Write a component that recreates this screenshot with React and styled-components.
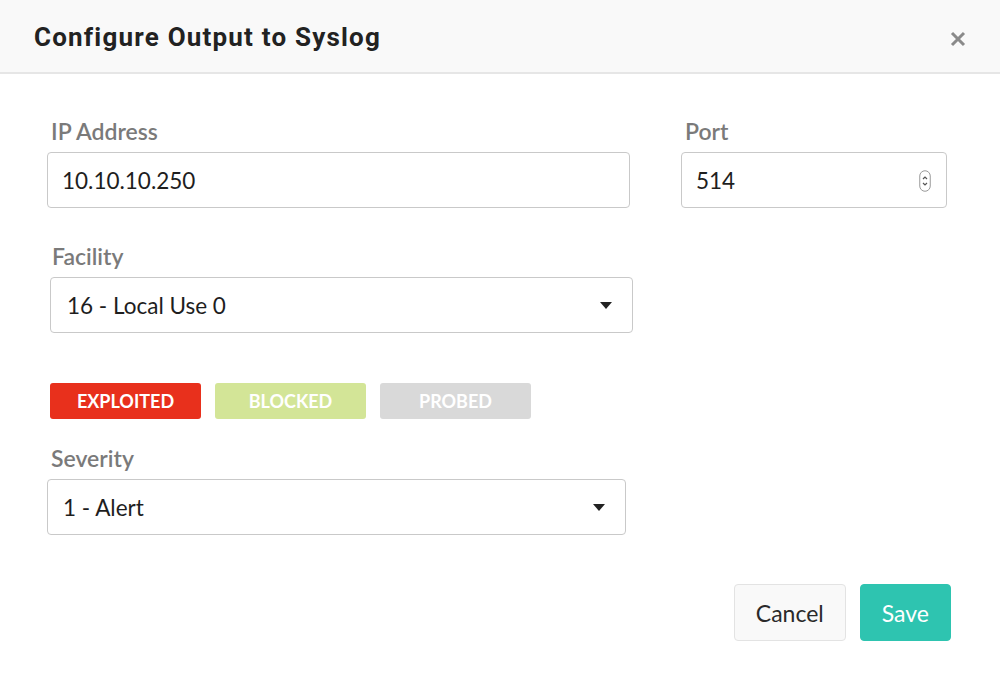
import React from "react";
import styled, { createGlobalStyle } from "styled-components";

const GlobalStyle = createGlobalStyle`
  html, body {
    margin: 0;
    padding: 0;
    background: #ffffff;
  }
  body {
    font-family: Lato, "Noto Sans", sans-serif;
  }
  * {
    box-sizing: border-box;
  }
`;

export default function App() {
  return (
    <>
      <GlobalStyle />
      <Modal>
        <Header>
          <Title>Configure Output to Syslog</Title>
          <CloseButton aria-label="close">
            <svg width="16" height="16" viewBox="0 0 16 16">
              <path
                d="M2 2 L14 14 M14 2 L2 14"
                stroke="#8a8a8a"
                strokeWidth="3"
                strokeLinecap="butt"
              />
            </svg>
          </CloseButton>
        </Header>

        <Body>
          <Row>
            <Field $width={583}>
              <Label>IP Address</Label>
              <Input>10.10.10.250</Input>
            </Field>
            <Field $width={266}>
              <Label>Port</Label>
              <Input>
                514
                <Spinner>
                  <svg width="12" height="22" viewBox="0 0 12 22">
                    <rect
                      x="0.75"
                      y="0.75"
                      width="10.5"
                      height="20.5"
                      rx="5.25"
                      fill="none"
                      stroke="#9a9a9a"
                      strokeWidth="1"
                    />
                    <path
                      d="M4 9 L6 7 L8 9 M4 13 L6 15 L8 13"
                      fill="none"
                      stroke="#555"
                      strokeWidth="1.2"
                    />
                  </svg>
                </Spinner>
              </Input>
            </Field>
          </Row>

          <Field $width={583} $shift={3} $top={35}>
            <Label $shift={-2}>Facility</Label>
            <Select>
              16 - Local Use 0
              <Caret />
            </Select>
          </Field>

          <Badges>
            <Badge $bg="#e8301c">EXPLOITED</Badge>
            <Badge $bg="#d3e597">BLOCKED</Badge>
            <Badge $bg="#d9d9d9">PROBED</Badge>
          </Badges>

          <Field $width={579} $top={26}>
            <Label>Severity</Label>
            <Select $pad={15}>
              1 - Alert
              <Caret />
            </Select>
          </Field>

          <Footer>
            <Button>Cancel</Button>
            <Button $primary>Save</Button>
          </Footer>
        </Body>
      </Modal>
    </>
  );
}

const Modal = styled.div`
  width: 1000px;
  height: 674px;
  background: #ffffff;
  display: flex;
  flex-direction: column;
`;

const Header = styled.div`
  height: 74px;
  background: #f9f9f9;
  border-bottom: 2px solid #e6e6e6;
  display: flex;
  align-items: center;
  justify-content: space-between;
  padding: 0 34px 0 34px;
`;

const Title = styled.h1`
  margin: 2px 0 0 0;
  font-family: Roboto, "Liberation Sans", sans-serif;
  font-weight: 700;
  font-size: 26px;
  color: #222222;
  letter-spacing: 1.2px;
`;

const CloseButton = styled.button`
  border: none;
  background: none;
  padding: 0;
  margin-top: 6px;
  display: flex;
  cursor: pointer;
`;

const Body = styled.div`
  display: flex;
  flex-direction: column;
  padding: 44px 53px 0 47px;
`;

const Row = styled.div`
  display: flex;
  justify-content: space-between;
`;

const Field = styled.div`
  width: ${(p) => p.$width}px;
  margin-left: ${(p) => p.$shift || 0}px;
  margin-top: ${(p) => p.$top || 0}px;
  display: flex;
  flex-direction: column;
`;

const Label = styled.label`
  font-size: 23px;
  line-height: 28px;
  color: #7a7a7a;
  margin: -1px 0 7px ${(p) => 4 + (p.$shift || 0)}px;
  font-weight: 600;
`;

const Input = styled.div`
  height: 56px;
  border: 1px solid #c9c9c9;
  border-radius: 4px;
  display: flex;
  align-items: center;
  justify-content: space-between;
  padding: 0 13px 0 14px;
  font-size: 22.5px;
  color: #1e1e1e;
`;

const Spinner = styled.span`
  display: flex;
  margin-right: 2px;
  margin-top: 2px;
`;

const Select = styled(Input)`
  padding: 0 20px 0 ${(p) => p.$pad || 16}px;
`;

const Caret = styled.span`
  width: 0;
  height: 0;
  border-left: 6px solid transparent;
  border-right: 6px solid transparent;
  border-top: 7px solid #222;
`;

const Badges = styled.div`
  display: flex;
  gap: 14px;
  margin: 50px 0 0 3px;
`;

const Badge = styled.div`
  width: 151px;
  height: 36px;
  border-radius: 3px;
  background: ${(p) => p.$bg};
  color: #ffffff;
  font-weight: 700;
  font-size: 18px;
  display: flex;
  align-items: center;
  justify-content: center;
`;

const Footer = styled.div`
  display: flex;
  justify-content: flex-end;
  gap: 14px;
  margin-top: 49px;
  margin-right: -4px;
`;

const Button = styled.button`
  height: 57px;
  padding: 0 21px;
  border-radius: 4px;
  font-family: Lato, "Noto Sans", sans-serif;
  font-size: 23px;
  cursor: pointer;
  border: 1px solid ${(p) => (p.$primary ? "#2ec4b0" : "#e3e3e3")};
  background: ${(p) => (p.$primary ? "#2ec4b0" : "#f9f9f9")};
  color: ${(p) => (p.$primary ? "#ffffff" : "#2a2a2a")};
`;
